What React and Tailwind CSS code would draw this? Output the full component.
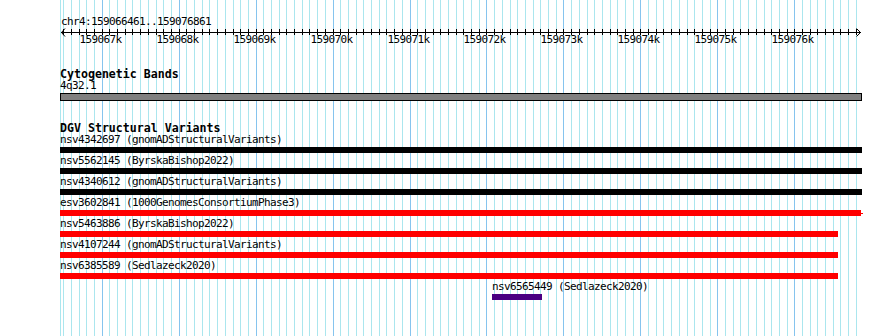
import React from "react";

const START = 159066461;
const X0 = 60.2;
const K = 0.07696;
const px = (bp) => X0 + (bp - START) * K;

const gridlines = [];
for (let bp = 159066500; bp <= 159076800; bp += 100) {
  gridlines.push({ x: Math.round(px(bp)), major: bp % 1000 === 0, bp });
}
const majors = gridlines.filter((g) => g.major);

const variants = [
  { name: "nsv4342697 (gnomADStructuralVariants)", color: "bg-black", w: 802 },
  { name: "nsv5562145 (ByrskaBishop2022)", color: "bg-black", w: 802 },
  { name: "nsv4340612 (gnomADStructuralVariants)", color: "bg-black", w: 802 },
  { name: "esv3602841 (1000GenomesConsortiumPhase3)", color: "bg-[#ff0000]", w: 801, stub: true },
  { name: "nsv5463886 (ByrskaBishop2022)", color: "bg-[#ff0000]", w: 778 },
  { name: "nsv4107244 (gnomADStructuralVariants)", color: "bg-[#ff0000]", w: 778 },
  { name: "nsv6385589 (Sedlazeck2020)", color: "bg-[#ff0000]", w: 778 },
];

const mono = "font-['DejaVu_Sans_Mono','Liberation_Mono',monospace]";
const label = "h-[12px] leading-[12px] text-[11px] tracking-[-0.62px] whitespace-nowrap text-black";
const heading = "h-[12px] leading-[12px] text-[11.6px] font-bold whitespace-nowrap text-black";

const Ruler = () => (
  <div className="relative h-[18px] w-full">
    <svg className="absolute left-0 top-0" width="890" height="9" shapeRendering="crispEdges">
      <rect x="61" y="4" width="800" height="1" fill="#000" />
      {gridlines.map((g) => (
        <rect key={g.bp} x={g.x} y="1" width="1" height="6" fill="#000" />
      ))}
      <polyline points="65,0.5 61.5,4.5 65,8.5" fill="none" stroke="#000" strokeWidth="1" shapeRendering="auto" />
      <polyline points="856.5,0.5 860.5,4.5 856.5,8.5" fill="none" stroke="#000" strokeWidth="1" shapeRendering="auto" />
    </svg>
    {majors.map((g) => (
      <span
        key={g.bp}
        className={`absolute top-[6px] ${label}`}
        style={{ left: g.x - 22.5 }}
      >
        {Math.round(g.bp / 1000)}k
      </span>
    ))}
  </div>
);

export default function App() {
  return (
    <div className={`relative w-[890px] h-[336px] overflow-hidden bg-white ${mono}`}>
      {/* grid */}
      <div className="absolute inset-0">
        <div className="absolute top-0 h-full w-px bg-[#abe6ee] left-[60px]" />
        {gridlines.map((g) => (
          <div
            key={g.bp}
            className={`absolute top-0 h-full w-px ${g.major ? "bg-[#86c4ee]" : "bg-[#abe6ee]"}`}
            style={{ left: g.x }}
          />
        ))}
      </div>

      <div className="relative flex flex-col">
        <div className={`mt-[16px] pl-[61px] ${label}`}>chr4:159066461..159076861</div>
        <Ruler />

        <div className={`mt-[22px] pl-[60px] ${heading}`}>Cytogenetic Bands</div>
        <div className={`pl-[60px] ${label}`}>4q32.1</div>
        <div className="mt-[1px] ml-[60px] h-[8px] w-[802px] border border-black bg-[#808080]" />

        <div className={`mt-[21px] pl-[60px] ${heading}`}>DGV Structural Variants</div>
        {variants.map((v) => (
          <div key={v.name} className="flex flex-col">
            <div className={`pl-[60px] ${label}`}>{v.name}</div>
            <div className="mt-[1px] mb-[2px] ml-[60px] flex h-[6px] items-center">
              <div className={`h-[6px] ${v.color}`} style={{ width: v.w }} />
              {v.stub && <div className="h-px w-[2px] bg-[#ff0000]" />}
            </div>
          </div>
        ))}
        <div className="flex flex-col">
          <div className={`pl-[492px] ${label}`}>nsv6565449 (Sedlazeck2020)</div>
          <div className="mt-[1px] ml-[492px] h-[6px] w-[50px] bg-[#4b0082]" />
        </div>
      </div>
    </div>
  );
}
